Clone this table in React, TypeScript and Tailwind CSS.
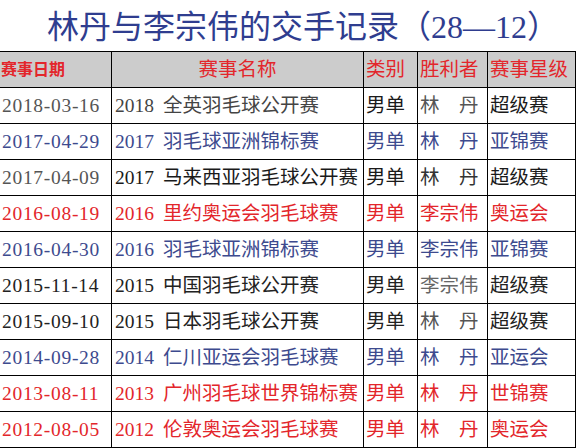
import React from "react";

type Row = {
  date: string;
  year: string;
  event: string;
  type: string;
  winner: string;
  level: string;
  colors: [string, string, string, string, string];
};

const RED = "text-[#e3262b]";
const BLUE = "text-[#3d4a8e]";

const red: Row["colors"] = [RED, RED, RED, RED, RED];
const blue: Row["colors"] = [BLUE, BLUE, BLUE, BLUE, BLUE];

const rows: Row[] = [
  {
    date: "2018-03-16",
    year: "2018",
    event: "全英羽毛球公开赛",
    type: "男单",
    winner: "林　丹",
    level: "超级赛",
    colors: ["text-[#555555]", "text-[#444444]", "text-[#1a1a1a]", "text-[#555555]", "text-[#1a1a1a]"],
  },
  { date: "2017-04-29", year: "2017", event: "羽毛球亚洲锦标赛", type: "男单", winner: "林　丹", level: "亚锦赛", colors: blue },
  {
    date: "2017-04-09",
    year: "2017",
    event: "马来西亚羽毛球公开赛",
    type: "男单",
    winner: "林　丹",
    level: "超级赛",
    colors: ["text-[#555555]", "text-[#1a1a1a]", "text-[#1a1a1a]", "text-[#333333]", "text-[#1a1a1a]"],
  },
  { date: "2016-08-19", year: "2016", event: "里约奥运会羽毛球赛", type: "男单", winner: "李宗伟", level: "奥运会", colors: red },
  { date: "2016-04-30", year: "2016", event: "羽毛球亚洲锦标赛", type: "男单", winner: "李宗伟", level: "亚锦赛", colors: blue },
  {
    date: "2015-11-14",
    year: "2015",
    event: "中国羽毛球公开赛",
    type: "男单",
    winner: "李宗伟",
    level: "超级赛",
    colors: ["text-[#222222]", "text-[#222222]", "text-[#222222]", "text-[#666666]", "text-[#222222]"],
  },
  {
    date: "2015-09-10",
    year: "2015",
    event: "日本羽毛球公开赛",
    type: "男单",
    winner: "林　丹",
    level: "超级赛",
    colors: ["text-[#222222]", "text-[#222222]", "text-[#222222]", "text-[#555555]", "text-[#222222]"],
  },
  { date: "2014-09-28", year: "2014", event: "仁川亚运会羽毛球赛", type: "男单", winner: "林　丹", level: "亚运会", colors: blue },
  { date: "2013-08-11", year: "2013", event: "广州羽毛球世界锦标赛", type: "男单", winner: "林　丹", level: "世锦赛", colors: red },
  { date: "2012-08-05", year: "2012", event: "伦敦奥运会羽毛球赛", type: "男单", winner: "林　丹", level: "奥运会", colors: red },
];

const font = "font-['Liberation_Serif','Noto_Sans_CJK_SC',serif]";
const cell = "h-[36px] border-b border-r border-black flex items-center whitespace-nowrap overflow-hidden";
const headCell = "h-[37px] border-t border-b border-r border-black bg-[#cccccc] flex items-center whitespace-nowrap";

export default function App() {
  return (
    <div className={`w-[584px] h-[448px] bg-white overflow-hidden ${font}`}>
      <div className="h-[51px] flex items-center justify-center pl-[22px] pt-[3px]">
        <h1 className="text-[32px] leading-none font-normal text-[#2f3d8f]">林丹与李宗伟的交手记录（28—12）</h1>
      </div>

      <div className="grid grid-cols-[112px_252px_54px_70px_88px] text-[19.5px] leading-none">
        <div className={`${headCell} pl-[1px] text-[16px] font-bold text-[#e3262b]`}>赛事日期</div>
        <div className={`${headCell} justify-center text-[#e3262b]`}>赛事名称</div>
        <div className={`${headCell} pl-[2px] text-[#e3262b]`}>类别</div>
        <div className={`${headCell} pl-[2px] text-[#e3262b]`}>胜利者</div>
        <div className={`${headCell} pl-[2px] text-[#e3262b]`}>赛事星级</div>

        {rows.map((r) => (
          <React.Fragment key={r.date}>
            <div className={`${cell} pl-[2px] tracking-[0.7px] ${r.colors[0]}`}>{r.date}</div>
            <div className={`${cell} pl-[3px] ${r.colors[1]}`}>
              <span>{r.year}</span>
              <span className="ml-[9px]">{r.event}</span>
            </div>
            <div className={`${cell} pl-[2px] ${r.colors[2]}`}>{r.type}</div>
            <div className={`${cell} pl-[2px] ${r.colors[3]}`}>{r.winner}</div>
            <div className={`${cell} pl-[2px] ${r.colors[4]}`}>{r.level}</div>
          </React.Fragment>
        ))}
      </div>
    </div>
  );
}
